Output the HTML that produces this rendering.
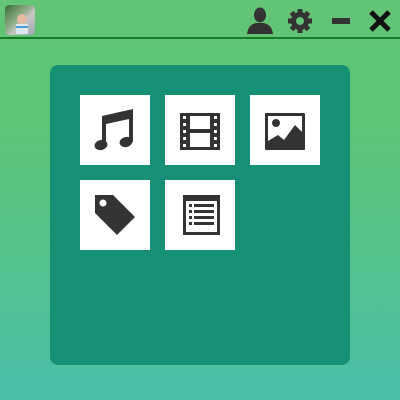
<!DOCTYPE html>
<html><head><style>
body{margin:0;width:400px;height:400px;overflow:hidden;background:linear-gradient(#62c474,#5ec476 30%,#4bbfa8);font-family:"Liberation Sans",sans-serif;position:relative}
.bar{position:absolute;left:0;top:0;width:400px;border-bottom:2px solid #167a2c;height:37px}
.av{position:absolute;left:5px;top:5px;width:30px;height:30px;border-radius:4px;background:linear-gradient(135deg,#3d6b3a,#8fb08a 45%,#c9c7c6 60%,#9aa7b3)}
.panel{position:absolute;left:50px;top:65px;width:300px;height:300px;background:#179175;border-radius:8px}
.t{position:absolute;width:70px;height:70px;background:#fff}
svg{position:absolute}
</style></head><body>
<div class="bar"></div>
<div class="av"><svg width="30" height="30" viewBox="0 0 30 30"><circle cx="17" cy="14" r="5" fill="#e7b9a0"/><rect x="11" y="19" width="12" height="10" fill="#dfe6ee"/><rect x="11" y="21" width="12" height="2" fill="#4aa0d8"/></svg></div>
<svg style="left:246px;top:7px" width="28" height="27" viewBox="0 0 28 27"><ellipse cx="14" cy="8" rx="6" ry="7.5" fill="#333"/><path d="M1 27 Q2 18 10 16 L18 16 Q26 18 27 27Z" fill="#333"/></svg>
<svg style="left:287px;top:8px" width="26" height="26" viewBox="0 0 26 26"><g fill="#333" transform="translate(13 13)"><circle r="9"/><rect x="-2.5" y="-12" width="5" height="24"/><rect x="-2.5" y="-12" width="5" height="24" transform="rotate(45)"/><rect x="-2.5" y="-12" width="5" height="24" transform="rotate(90)"/><rect x="-2.5" y="-12" width="5" height="24" transform="rotate(135)"/><circle r="4" fill="#5fc474"/></g></svg>
<div style="position:absolute;left:332px;top:18px;width:18px;height:6px;background:#333"></div>
<svg style="left:368px;top:9px" width="24" height="24" viewBox="0 0 24 24"><path d="M3 3L21 21M21 3L3 21" stroke="#111" stroke-width="5"/></svg>
<div class="panel"></div>
<div class="t" style="left:80px;top:95px"><svg width="70" height="70" viewBox="0 0 70 70"><g fill="#333"><path d="M22 21 L53 14 L53 47 L49 47 L49 24 L26 29 L26 50 L22 50Z"/><ellipse cx="21" cy="50" rx="6.5" ry="5" transform="rotate(-15 21 50)"/><ellipse cx="46" cy="47" rx="6.5" ry="5" transform="rotate(-15 46 47)"/></g></svg></div>
<div class="t" style="left:165px;top:95px"><svg width="70" height="70" viewBox="0 0 70 70"><rect x="15" y="18" width="40" height="37" fill="#333"/><g fill="#fff"><rect x="25" y="21" width="20" height="13"/><rect x="25" y="38" width="20" height="14"/><rect x="18" y="21" width="3" height="3"/><rect x="18" y="28" width="3" height="3"/><rect x="18" y="35" width="3" height="3"/><rect x="18" y="42" width="3" height="3"/><rect x="18" y="49" width="3" height="3"/><rect x="49" y="21" width="3" height="3"/><rect x="49" y="28" width="3" height="3"/><rect x="49" y="35" width="3" height="3"/><rect x="49" y="42" width="3" height="3"/><rect x="49" y="49" width="3" height="3"/></g></svg></div>
<div class="t" style="left:250px;top:95px"><svg width="70" height="70" viewBox="0 0 70 70"><rect x="15" y="18" width="40" height="37" rx="1" fill="#333"/><rect x="18" y="21" width="34" height="31" fill="#fff"/><circle cx="26" cy="28" r="4" fill="#333"/><path d="M18 46 L28 40 L34 45 L45 30 L52 37 L52 52 L18 52Z" fill="#333"/></svg></div>
<div class="t" style="left:80px;top:180px"><svg width="70" height="70" viewBox="0 0 70 70"><path d="M15 15 L33 15 L55 37 L37 55 L15 33Z" fill="#333"/><circle cx="23" cy="23" r="3.5" fill="#fff"/></svg></div>
<div class="t" style="left:165px;top:180px"><svg width="70" height="70" viewBox="0 0 70 70"><rect x="18" y="15" width="37" height="40" fill="#333"/><rect x="21" y="21" width="31" height="31" fill="#fff"/><g fill="#333"><rect x="24" y="24" width="3" height="3"/><rect x="29" y="24" width="20" height="3"/><rect x="24" y="30" width="3" height="3"/><rect x="29" y="30" width="20" height="3"/><rect x="24" y="36" width="3" height="3"/><rect x="29" y="36" width="20" height="3"/><rect x="24" y="42" width="3" height="3"/><rect x="29" y="42" width="20" height="3"/></g></svg></div>
</body></html>
